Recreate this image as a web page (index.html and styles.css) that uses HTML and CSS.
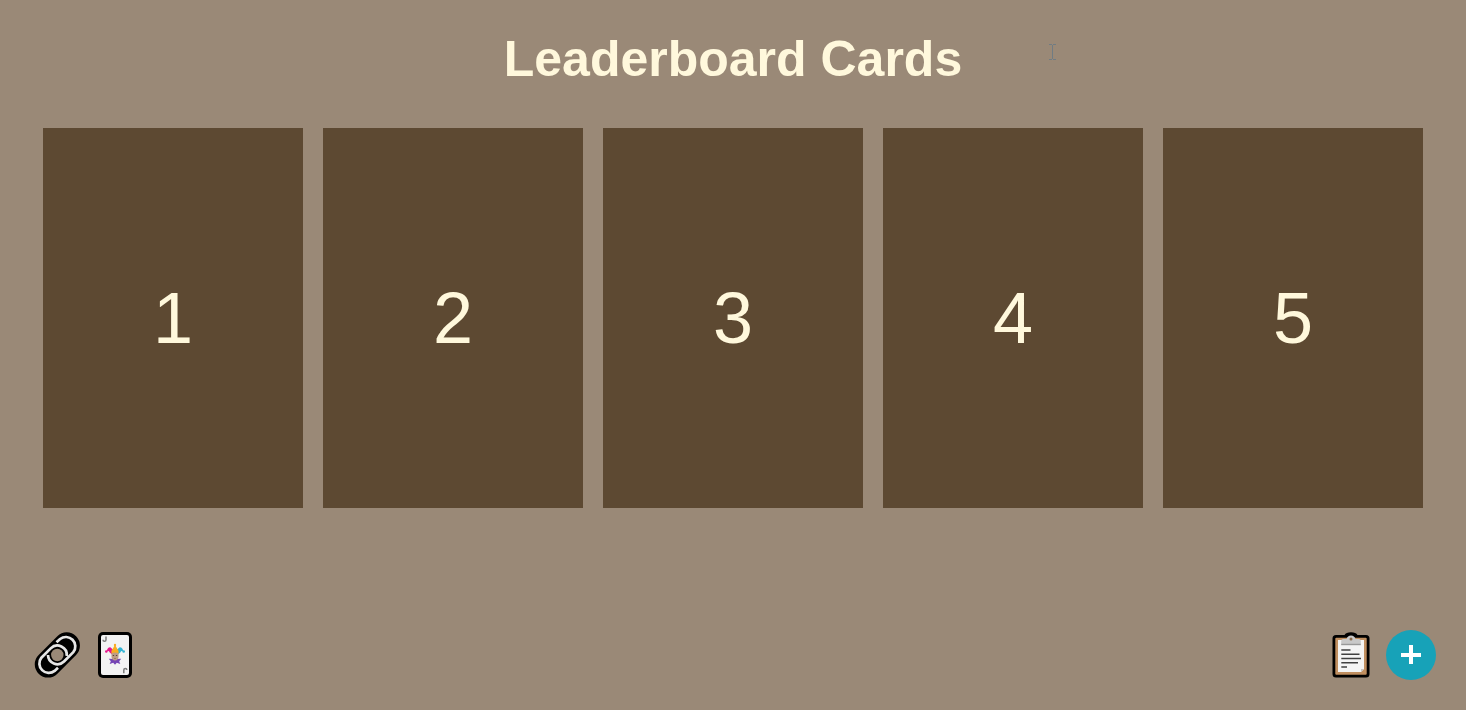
FILE: index.html
```html
<!DOCTYPE html>
<html lang="en">
<head>
<meta charset="utf-8">
<meta name="viewport" content="width=device-width, initial-scale=1">
<title>Leaderboard Cards</title>
<link rel="stylesheet" href="styles.css">
</head>
<body>
<header class="header">
  <h1 class="title">Leaderboard Cards</h1>
  <svg class="text-cursor" viewBox="0 0 9 18" aria-hidden="true"><path d="M1 1.5h3M5 1.5h3M4.5 2v14M1 16.5h3M5 16.5h3"/></svg>
</header>
<main class="cards">
  <button class="card" type="button">1</button>
  <button class="card" type="button">2</button>
  <button class="card" type="button">3</button>
  <button class="card" type="button">4</button>
  <button class="card" type="button">5</button>
</main>
<footer class="toolbar">
  <div class="tools tools-left">
    <button class="tool" type="button" aria-label="Links">
      <svg viewBox="0 0 50 50" fill="none" stroke-linecap="round">
        <path d="M16 34.300 34.700 15.600" stroke="#000" stroke-width="26.500"/>
        <g stroke="#e6e6e6" stroke-width="2.7" stroke-linecap="butt">
          <path d="M24.500 12.300 28.100 9A9.400 9.400 0 0 1 41.300 22.200L32 31.500A9.400 9.400 0 0 1 16 25"/>
          <path d="M26 37.700 22.600 40.900A9.400 9.400 0 0 1 9.400 27.700L18.700 18.400A9.400 9.400 0 0 1 34.700 26"/>
        </g>
        <circle cx="25.300" cy="25" r="6.200" fill="#9a8978"/>
      </svg>
    </button>
    <button class="tool" type="button" aria-label="Joker card">
      <svg viewBox="0 0 50 50">
        <rect x="8" y="2" width="34" height="46" rx="5"/>
        <rect x="11" y="5" width="28" height="40" rx="2" fill="#f3f3f3"/>
        <g fill="none" stroke="#7d7d7d" stroke-width="1.5">
          <path d="M16 6.500v3.200q0 1.600-1.500 1.600T13 9.700"/>
          <path d="M33.800 43.200v-3.200q0-1.600 1.500-1.600t1.500 1.600"/>
        </g>
        <path d="M19.700 34 20.800 31.200 18.800 28.800 25 29 31.200 28.800 29.200 31.200 30.300 34 26.800 32.800 25 34.800 23.200 32.800z" fill="#7444b5"/>
        <path d="M22 24.500 19.500 22.300Q19 20.300 16.800 21.300Q17 17.500 20.300 17.200L23.500 20z" fill="#e5168c"/>
        <path d="M28 24.500 30.500 22.300Q31 20.300 33.200 21.300Q33 17.500 29.700 17.200L26.500 20z" fill="#31b3d5"/>
        <path d="M21.500 23.800Q20.800 20.500 23.200 18L25 14.800 26.800 18Q29.200 20.500 28.500 23.800z" fill="#f8ac20"/>
        <circle cx="25" cy="15" r="1.200" fill="#f8ac20"/>
        <circle cx="16.300" cy="21.500" r="1.300" fill="#e5168c"/>
        <circle cx="33.700" cy="21.500" r="1.300" fill="#31b3d5"/>
        <path d="M21.500 23.500Q25 21.500 28.500 23.500V27Q28 30.300 25 30.500Q22 30.300 21.500 27z" fill="#bd9b85"/>
        <path d="M22.800 25.500h1.300M25.900 25.500h1.300" stroke="#55443b" stroke-width="1.2"/>
        <path d="M24 28.500h2" stroke="#8c6a58" stroke-width=".7"/>
      </svg>
    </button>
  </div>
  <div class="tools tools-right">
    <button class="tool" type="button" aria-label="Clipboard">
      <svg viewBox="0 0 50 50">
        <path d="M10 5h8.500Q20 2.500 25 2.300Q30 2.500 31.500 5H40q3.500 0 3.500 3.500v35.500q0 3.500-3.500 3.500H10q-3.500 0-3.500-3.500V8.500Q6.500 5 10 5z"/>
        <rect x="9.300" y="7.800" width="31.400" height="37" rx="1" fill="#c08f60"/>
        <path d="M12 10h26v29l-3 3H12z" fill="#f4f4f4"/>
        <path d="M35 42v-3h3z" fill="#c8c5c2"/>
        <path d="M15.200 14.500V11q0-2 2-2h3.300q1-3.600 4.500-3.600T29.500 9h3.300q2 0 2 2v3.500z" fill="#c9c9c9"/>
        <path d="M15.200 14.500h19.600" stroke="#999" stroke-width="1.400"/>
        <circle cx="25" cy="9" r="1.500" fill="#8b6c4d"/>
        <path d="M15.300 20h9.200M15.300 24.300h18.200M15.300 28.500h19.700M15.300 32.700h16.700M15.300 36.900h5.700" stroke="#404040" stroke-width="1.500"/>
      </svg>
    </button>
    <button class="tool tool-add" type="button" aria-label="Add">
      <svg viewBox="0 0 50 50"><path d="M25 15v19M15 25h20" fill="none" stroke="#fff" stroke-width="4"/></svg>
    </button>
  </div>
</footer>
</body>
</html>
```
FILE: styles.css
```css
* {
  box-sizing: border-box;
}

body {
  margin: 0;
  min-height: 100vh;
  display: flex;
  flex-direction: column;
  background: #9a8977;
  color: #fff8dc;
  font-family: "Liberation Sans", Arial, sans-serif;
}

button {
  border: 0;
  padding: 0;
  color: inherit;
  font: inherit;
  cursor: pointer;
}

.header {
  position: relative;
  padding: 30px 20px 40px;
  text-align: center;
}

.title {
  margin: 0;
  font-size: 50px;
  line-height: 58px;
}

.text-cursor {
  position: absolute;
  top: 43px;
  left: 1048px;
  width: 9px;
  height: 18px;
  fill: none;
  stroke: #707c83;
}

.cards {
  display: grid;
  grid-template-columns: repeat(5, 1fr);
  gap: 20px;
  width: calc(100% - 40px);
  max-width: 1380px;
  margin: 0 auto 40px;
}

.card {
  aspect-ratio: 13 / 19;
  display: flex;
  align-items: center;
  justify-content: center;
  background: #5d4932;
  font-size: 72px;
}

.toolbar {
  display: flex;
  justify-content: space-between;
  margin-top: auto;
  padding: 0 30px 30px 32px;
}

.tools {
  display: flex;
}

.tools-left {
  gap: 8px;
}

.tools-right {
  gap: 10px;
}

.tool {
  width: 50px;
  height: 50px;
  background: none;
}

.tool svg {
  display: block;
  width: 100%;
}

.tool-add {
  border-radius: 50%;
  background: #17a2b8;
}
```
